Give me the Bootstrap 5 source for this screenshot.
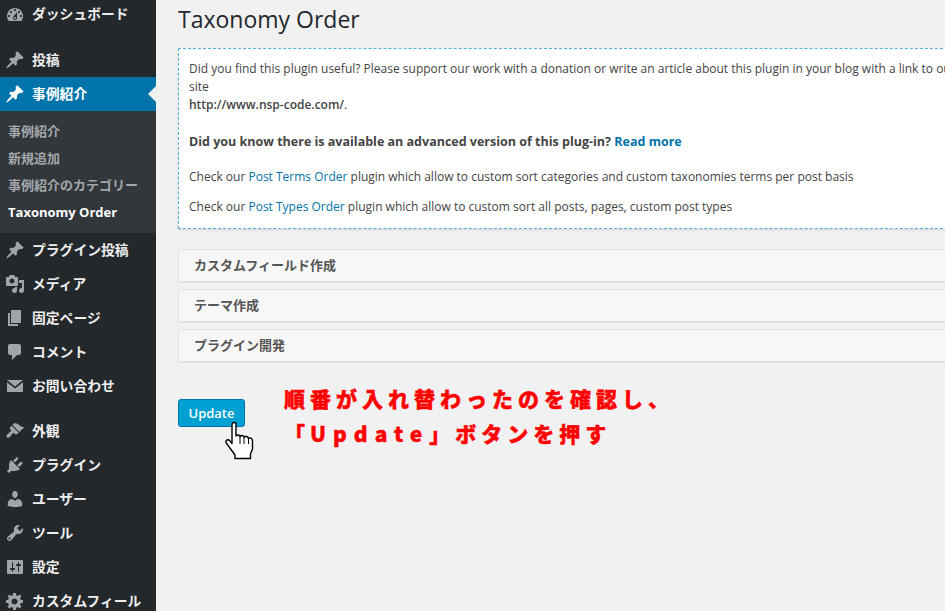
<!DOCTYPE html>
<html lang="ja">
<head>
  <meta charset="UTF-8" />
  <meta name="viewport" content="width=device-width, initial-scale=1" />
  <title>Taxonomy Order</title>
  <link href="https://cdn.jsdelivr.net/npm/bootstrap@5.3.2/dist/css/bootstrap.min.css" rel="stylesheet">
  <style>
    html, body { height: 611px; overflow: hidden; }
    body {
      font-family: "Open Sans", "Noto Sans CJK JP", sans-serif;
      background: #f1f1f1;
      color: #444;
      font-size: 12px;
    }
    .wp-menu {
      width: 156px;
      height: 611px;
      flex: none;
      background: #23282d;
      font-family: "Open Sans", "Noto Sans CJK JP", sans-serif;
      overflow: hidden;
    }
    .wp-item {
      height: 34px;
      padding-left: 32px;
      position: relative;
      display: flex;
      align-items: center;
      color: #eee;
      font-size: 13.8px;
      font-weight: 700;
      white-space: nowrap;
    }
    .wp-item svg {
      position: absolute;
      left: 5px;
      top: 7px;
      width: 20px;
      height: 20px;
      fill: #a0a5aa;
    }
    .wp-first { height: 29px; margin-bottom: 14px; }
    .wp-first svg { top: 5px; }
    .wp-gap { margin-top: 11px; }
    .wp-current { background: #0073aa; color: #fff; }
    .wp-current svg { fill: #fff; }
    .wp-current::after {
      content: "";
      position: absolute;
      right: 0;
      top: 9px;
      border: 8px solid transparent;
      border-right-color: #f1f1f1;
      border-left-width: 0;
    }
    .wp-sub { background: #32373c; padding: 7px 0; }
    .wp-sub div {
      height: 27px;
      line-height: 27px;
      padding-left: 8px;
      font-size: 13px;
      font-weight: 700;
      color: #a3a7ab;
      white-space: nowrap;
    }
    .wp-sub .wp-sub-on { color: #fff; }
    .wp-content { position: relative; flex: 1 1 auto; overflow: hidden; padding-left: 22px; }
    .wp-inner { width: 805px; }
    .wp-title {
      font-size: 23px;
      font-weight: 400;
      line-height: 30px;
      margin: 4px 0 14px;
      color: #23282d;
    }
    .wp-notice {
      background: #fff;
      border: 1px dashed #55afd0;
      box-shadow: 0 1px 2px rgba(0,0,0,.12);
      height: 181px;
      padding: 11px 10px 0;
      line-height: 18px;
      margin-bottom: 20px;
    }
    .wp-notice p { margin: 0; }
    .wp-notice a { color: #0073aa; text-decoration: none; }
    .wp-notice .wp-url { font-weight: 600; }
    .wp-notice .wp-ask { font-size: 12.5px; font-weight: 700; }
    .wp-para-a { padding-bottom: 19px; }
    .wp-para-b { padding-bottom: 17px; }
    .wp-para-c { padding-bottom: 12px; }
    .wp-bars { display: flex; flex-direction: column; gap: 6px; }
    .wp-bar {
      height: 34px;
      background: #f7f7f7;
      border: 1px solid #e2e2e2;
      border-bottom-width: 2px;
      border-radius: 4px;
      padding: 1px 0 0 15px;
      display: flex;
      align-items: center;
      font-weight: 700;
      font-size: 13px;
      color: #555;
    }
    .wp-update {
      margin-top: 36px;
      width: 67px;
      height: 28px;
      padding: 0;
      background: #00a0d2;
      border: 1px solid #0073aa;
      border-radius: 3px;
      color: #fff;
      font-size: 13px;
      font-weight: 600;
      line-height: 26px;
    }
    .wp-note {
      position: absolute;
      color: #f00;
      font-family: "Noto Sans CJK JP", sans-serif;
      font-weight: 900;
      font-size: 21px;
      letter-spacing: 5px;
      line-height: 26px;
      white-space: nowrap;
      -webkit-text-stroke: .4px #f00;
    }
    .wp-note-a { left: 128px; top: 385px; }
    .wp-note-b { left: 128px; top: 420px; }
    .wp-note-b span { letter-spacing: 7px; }
    .wp-hand { position: absolute; left: 69px; top: 421px; width: 29px; height: 39px; }
  </style>
</head>
<body>
<svg width="0" height="0" class="position-absolute">
  <symbol id="i-dash" viewBox="0 0 20 20"><path d="M3.76 16h12.48c1.1-1.37 1.76-3.11 1.76-5 0-4.42-3.58-8-8-8s-8 3.58-8 8c0 1.89.66 3.63 1.76 5zM10 4c.55 0 1 .45 1 1s-.45 1-1 1-1-.45-1-1 .45-1 1-1zM6 6c.55 0 1 .45 1 1s-.45 1-1 1-1-.45-1-1 .45-1 1-1zm8 0c.55 0 1 .45 1 1s-.45 1-1 1-1-.45-1-1 .45-1 1-1zm-5.37 5.55L12 7v6c0 1.1-.9 2-2 2s-2-.9-2-2c0-.57.24-1.08.63-1.45zM4 10c.55 0 1 .45 1 1s-.45 1-1 1-1-.45-1-1 .45-1 1-1zm12 0c.55 0 1 .45 1 1s-.45 1-1 1-1-.45-1-1 .45-1 1-1zm-5 3c0-.55-.45-1-1-1s-1 .45-1 1 .45 1 1 1 1-.45 1-1z"/></symbol>
  <symbol id="i-pin" viewBox="0 0 20 20"><path d="M10.44 3.02l1.82-1.82 6.36 6.35-1.83 1.82c-1.05-.68-2.48-.57-3.41.36l-.75.75c-.92.93-1.04 2.35-.35 3.41l-1.83 1.82-2.41-2.41-2.8 2.79c-.42.42-3.38 2.71-3.8 2.29s1.86-3.39 2.28-3.81l2.79-2.79L4.1 9.36l1.83-1.82c1.05.69 2.48.57 3.4-.36l.75-.75c.93-.92 1.05-2.35.36-3.41z"/></symbol>
  <symbol id="i-media" viewBox="0 0 20 20"><path d="M13 11V4c0-.55-.45-1-1-1h-1.67L9 1H5L3.67 3H2c-.55 0-1 .45-1 1v7c0 .55.45 1 1 1h10c.55 0 1-.45 1-1zM7 4.5c1.38 0 2.5 1.12 2.5 2.5S8.38 9.5 7 9.5 4.5 8.38 4.5 7 5.62 4.5 7 4.5zM14 6h5v10.5c0 1.38-1.12 2.5-2.5 2.5S14 17.88 14 16.5s1.12-2.5 2.5-2.5c.17 0 .34.02.5.05V9h-3V6zm-4 8.05V13h2v3.5c0 1.38-1.12 2.5-2.5 2.5S7 17.88 7 16.5 8.12 14 9.5 14c.17 0 .34.02.5.05z"/></symbol>
  <symbol id="i-page" viewBox="0 0 20 20"><path d="M6 15V2h10v13H6zm-1 1h8v2H3V5h2v11z"/></symbol>
  <symbol id="i-comment" viewBox="0 0 20 20"><path d="M5 2h9c1.1 0 2 .9 2 2v7c0 1.1-.9 2-2 2h-2l-5 5v-5H5c-1.1 0-2-.9-2-2V4c0-1.1.9-2 2-2z"/></symbol>
  <symbol id="i-mail" viewBox="0 0 20 20"><path d="M2 4h16L10 10.5zM2 6.2V16h16V6.2l-8 6.4z"/></symbol>
  <symbol id="i-brush" viewBox="0 0 20 20"><path d="M14.48 11.06L7.41 3.99l1.5-1.5c.5-.56 2.3-.47 3.51.32 1.21.8 1.43 1.28 2.91 2.1 1.18.64 2.45 1.26 4.45.85zm-.71.71L6.7 4.7 4.93 6.47c-.39.39-.39 1.02 0 1.41l1.06 1.06c.39.39.39 1.03 0 1.42-.6.6-1.43 1.11-2.21 1.69-.35.26-.7.53-1.01.84-1.2 1.2-1.8 2.7-1 3.5s2.3.2 3.5-1c.31-.31.58-.66.84-1.01.58-.78 1.09-1.61 1.69-2.21.39-.39 1.03-.39 1.42 0l1.06 1.06c.39.39 1.02.39 1.41 0z"/></symbol>
  <symbol id="i-plug" viewBox="0 0 20 20"><path d="M13.11 4.36L9.87 7.6 8 5.73l3.24-3.24c.35-.34 1.05-.2 1.56.32.52.51.66 1.21.31 1.55zm-8 1.77l.91-1.12 9.01 9.01-1.19.84c-.71.71-2.63 1.16-3.82 1.16H6.14L4.9 17.26c-.59.59-1.54.59-2.12 0-.59-.58-.59-1.53 0-2.12l1.24-1.24v-3.88c0-1.13.4-3.19 1.09-3.89zm7.26 3.97l3.24-3.24c.34-.35 1.04-.21 1.55.31.52.51.66 1.21.31 1.55l-3.24 3.25z"/></symbol>
  <symbol id="i-user" viewBox="0 0 20 20"><path d="M10 9.25c-2.27 0-2.73-3.44-2.73-3.44C7 4.02 7.82 2 9.97 2c2.16 0 2.98 2.02 2.71 3.81 0 0-.41 3.44-2.68 3.44zm0 2.57L12.72 10c2.39 0 4.52 2.33 4.52 4.53v2.49s-3.65 1.13-7.24 1.13c-3.65 0-7.24-1.13-7.24-1.13v-2.49c0-2.25 1.94-4.48 4.47-4.48z"/></symbol>
  <symbol id="i-tool" viewBox="0 0 20 20"><path d="M16.68 9.77c-1.34 1.34-3.3 1.67-4.95.99l-5.41 6.52c-.99.99-2.59.99-3.58 0s-.99-2.59 0-3.57l6.52-5.42c-.68-1.65-.35-3.61.99-4.95 1.28-1.28 3.12-1.62 4.72-1.06l-2.89 2.89 2.82 2.82 2.86-2.87c.53 1.58.18 3.39-1.08 4.65zM3.81 16.21c.4.39 1.04.39 1.43 0 .4-.4.4-1.04 0-1.43-.39-.4-1.03-.4-1.43 0-.39.39-.39 1.03 0 1.43z"/></symbol>
  <symbol id="i-set" viewBox="0 0 20 20"><path d="M18 16V4c0-.55-.45-1-1-1H3c-.55 0-1 .45-1 1v12c0 .55.45 1 1 1h14c.55 0 1-.45 1-1zM8 11h1c.55 0 1 .45 1 1s-.45 1-1 1H8v1.5c0 .28-.22.5-.5.5s-.5-.22-.5-.5V13H6c-.55 0-1-.45-1-1s.45-1 1-1h1V5.5c0-.28.22-.5.5-.5s.5.22.5.5V11zm5-2h-1c-.55 0-1-.45-1-1s.45-1 1-1h1V5.5c0-.28.22-.5.5-.5s.5.22.5.5V7h1c.55 0 1 .45 1 1s-.45 1-1 1h-1v5.5c0 .28-.22.5-.5.5s-.5-.22-.5-.5V9z"/></symbol>
  <symbol id="i-gear" viewBox="0 0 20 20"><path d="M18 12h-2.18c-.17.7-.44 1.35-.81 1.93l1.54 1.54-2.1 2.1-1.54-1.54c-.58.36-1.23.63-1.91.79V19H8v-2.18c-.68-.16-1.33-.43-1.91-.79l-1.54 1.54-2.12-2.12 1.54-1.54c-.36-.58-.63-1.23-.79-1.91H1V9.03h2.17c.16-.7.44-1.35.8-1.94L2.43 5.55l2.1-2.1 1.54 1.54c.58-.37 1.24-.64 1.93-.81V2h3v2.18c.68.16 1.33.43 1.91.79l1.54-1.54 2.12 2.12-1.54 1.54c.36.59.64 1.24.8 1.94H18V12zm-8.5 1.5c1.66 0 3-1.34 3-3s-1.34-3-3-3-3 1.34-3 3 1.34 3 3 3z"/></symbol>
</svg>

<div class="d-flex">
  <!-- admin menu -->
  <nav class="wp-menu">
    <div class="wp-item wp-first"><svg><use href="#i-dash"/></svg>ダッシュボード</div>
    <div class="wp-item"><svg><use href="#i-pin"/></svg>投稿</div>
    <div class="wp-item wp-current"><svg><use href="#i-pin"/></svg>事例紹介</div>
    <div class="wp-sub">
      <div>事例紹介</div>
      <div>新規追加</div>
      <div>事例紹介のカテゴリー</div>
      <div class="wp-sub-on">Taxonomy Order</div>
    </div>
    <div class="wp-item"><svg><use href="#i-pin"/></svg>プラグイン投稿</div>
    <div class="wp-item"><svg><use href="#i-media"/></svg>メディア</div>
    <div class="wp-item"><svg><use href="#i-page"/></svg>固定ページ</div>
    <div class="wp-item"><svg><use href="#i-comment"/></svg>コメント</div>
    <div class="wp-item"><svg><use href="#i-mail"/></svg>お問い合わせ</div>
    <div class="wp-item wp-gap"><svg><use href="#i-brush"/></svg>外観</div>
    <div class="wp-item"><svg><use href="#i-plug"/></svg>プラグイン</div>
    <div class="wp-item"><svg><use href="#i-user"/></svg>ユーザー</div>
    <div class="wp-item"><svg><use href="#i-tool"/></svg>ツール</div>
    <div class="wp-item"><svg><use href="#i-set"/></svg>設定</div>
    <div class="wp-item"><svg><use href="#i-gear"/></svg>カスタムフィール</div>
  </nav>

  <!-- main -->
  <main class="wp-content">
    <div class="wp-inner">
      <h1 class="wp-title">Taxonomy Order</h1>
      <div class="wp-notice">
        <p class="wp-para-a">Did you find this plugin useful? Please support our work with a donation or write an article about this plugin in your blog with a link to our site<br><span class="wp-url">http://www.nsp-code.com/</span>.</p>
        <p class="wp-para-b wp-ask">Did you know there is available an advanced version of this plug-in? <a href="#">Read more</a></p>
        <p class="wp-para-c">Check our <a href="#">Post Terms Order</a> plugin which allow to custom sort categories and custom taxonomies terms per post basis</p>
        <p>Check our <a href="#">Post Types Order</a> plugin which allow to custom sort all posts, pages, custom post types</p>
      </div>
      <div class="wp-bars">
        <div class="wp-bar">カスタムフィールド作成</div>
        <div class="wp-bar">テーマ作成</div>
        <div class="wp-bar">プラグイン開発</div>
      </div>
      <button class="btn wp-update" type="button">Update</button>
    </div>

    <div class="wp-note wp-note-a">順番が入れ替わったのを確認し、</div>
    <div class="wp-note wp-note-b">「<span>Update</span>」ボタンを押す</div>
    <svg class="wp-hand" viewBox="0 0 29 39">
      <path d="M7 3.5C7 .8 11 .8 11 3.5V15C12 13.5 14.5 13.5 15 15.5 16 14 18.5 14 19 16.2 20 15 23 15 23.5 17.5 24.5 16.5 27.5 16.8 27.5 20V28L25.5 33V37.5H10V34L3.5 25 1 21.5C.5 19 3 18 4.5 19.5L7 22.5Z" fill="#fff" stroke="#000" stroke-width="1.4" stroke-linejoin="round"/>
      <path d="M15 15.5V23M19 16.2V23M23.5 17.5V23" fill="none" stroke="#000"/>
    </svg>
  </main>
</div>
<script src="https://cdn.jsdelivr.net/npm/bootstrap@5.3.2/dist/js/bootstrap.bundle.min.js"></script>
</body>
</html>
